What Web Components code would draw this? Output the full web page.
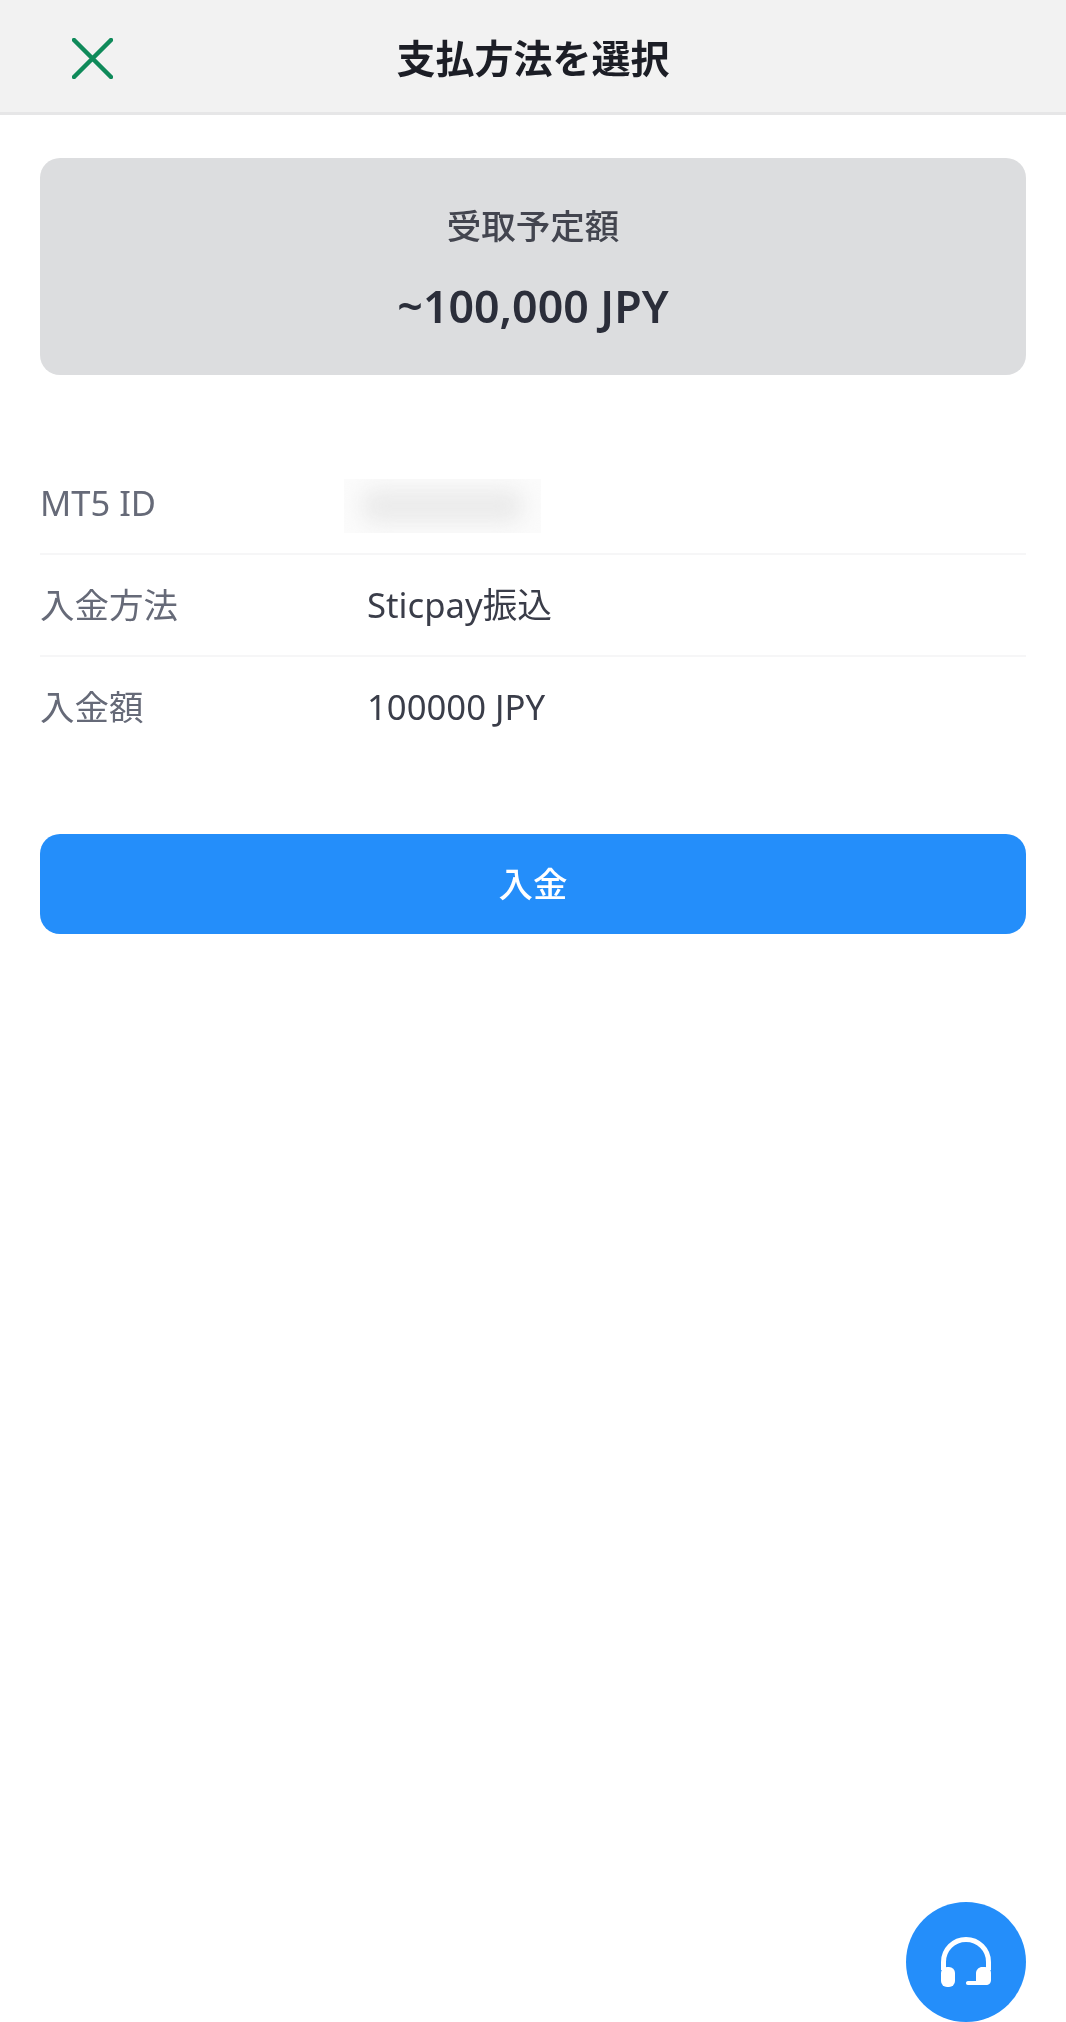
<!DOCTYPE html>
<html lang="ja">
<head>
<meta charset="utf-8">
<title>支払方法を選択</title>
<style>
  html, body {
    margin: 0;
    background: #fff;
    font-family: "Noto Sans", "Noto Sans CJK JP", sans-serif;
  }
</style>
</head>
<body>
<pay-page>
  <pay-header slot="header">支払方法を選択</pay-header>
  <pay-summary label="受取予定額">~100,000 JPY</pay-summary>
  <pay-rows>
    <pay-row label="MT5 ID"><pay-redacted></pay-redacted></pay-row>
    <pay-row label="入金方法">Sticpay振込</pay-row>
    <pay-row label="入金額" last>100000 JPY</pay-row>
  </pay-rows>
  <pay-button>入金</pay-button>
  <pay-support slot="overlay"></pay-support>
</pay-page>

<script>
const define = (name, html) => {
  customElements.define(name, class extends HTMLElement {
    constructor () {
      super()
      this.attachShadow({ mode: 'open' }).innerHTML = html
      const label = this.shadowRoot.querySelector('[data-label]')
      if (label) label.textContent = this.getAttribute('label')
    }
  })
}

define('pay-page', `
  <style>
    :host {
      display: block;
      position: relative;
      width: 1066px;
      height: 2022px;
      overflow: hidden;
      color: #2f3340;
      filter: blur(0.4px);
    }
    main {
      display: flex;
      flex-direction: column;
      padding: 43px 40px 0;
    }
  </style>
  <slot name="header"></slot>
  <main><slot></slot></main>
  <slot name="overlay"></slot>
`)

define('pay-header', `
  <style>
    :host {
      display: flex;
      align-items: center;
      justify-content: center;
      position: relative;
      height: 112px;
      background: #f2f2f2;
      border-bottom: 3px solid #e6e6e7;
      font-size: 39px;
      font-weight: 700;
      color: #1c1e26;
    }
    svg {
      position: absolute;
      left: 72px;
      top: 38px;
    }
  </style>
  <svg width="41" height="41" viewBox="0 0 41 41" fill="none" stroke="#0f8a5a" stroke-width="4.500" stroke-linecap="round">
    <path d="M2 2 39 39M39 2 2 39"/>
  </svg>
  <slot></slot>
`)

define('pay-summary', `
  <style>
    :host {
      display: flex;
      flex-direction: column;
      align-items: center;
      height: 217px;
      box-sizing: border-box;
      padding-top: 43px;
      background: #dcdddf;
      border-radius: 20px;
    }
    #label {
      font-size: 34.5px;
      font-weight: 500;
      line-height: 50px;
      color: #43454f;
    }
    #value {
      margin-top: 26px;
      font-size: 44.700px;
      font-weight: 600;
      line-height: 58px;
      color: #2b2e3a;
    }
  </style>
  <div id="label" data-label></div>
  <div id="value"><slot></slot></div>
`)

define('pay-rows', `
  <style>
    :host {
      display: block;
      margin-top: 78px;
    }
  </style>
  <slot></slot>
`)

define('pay-row', `
  <style>
    :host {
      display: grid;
      grid-template-columns: 327px 1fr;
      align-items: center;
      height: 100px;
      border-bottom: 2px solid #f6f6f7;
      font-size: 34.7px;
      line-height: 1.2;
      color: #3a3d49;
    }
    :host([last]) {
      border-bottom-color: transparent;
    }
    #label {
      font-size: 34.5px;
      color: #666a78;
    }
  </style>
  <div id="label" data-label></div>
  <div><slot></slot></div>
`)

define('pay-redacted', `
  <style>
    :host {
      display: block;
      position: relative;
      width: 197px;
      height: 54px;
      margin: 6px 0 0 -23px;
      background: #fbfbfb;
      overflow: hidden;
    }
    div {
      position: absolute;
      inset: 10px 18px;
      background: #ebebeb;
      border-radius: 14px;
      filter: blur(10px);
    }
  </style>
  <div></div>
`)

define('pay-button', `
  <style>
    :host {
      display: flex;
      align-items: center;
      justify-content: center;
      height: 100px;
      margin-top: 75px;
      background: #248efa;
      border-radius: 20px;
      font-size: 34.5px;
      font-weight: 500;
      line-height: 1.2;
      color: #fff;
    }
  </style>
  <slot></slot>
`)

define('pay-support', `
  <style>
    :host {
      position: absolute;
      right: 40px;
      bottom: 0;
      display: flex;
      align-items: center;
      justify-content: center;
      width: 120px;
      height: 120px;
      border-radius: 50%;
      background: #248efa;
    }
    svg { display: block; }
  </style>
  <svg width="50" height="50" viewBox="0 0 50 50" fill="none">
    <path d="M2.500 33V25A22.500 22.500 0 0 1 47.500 25V33" stroke="#fff" stroke-width="5"/>
    <rect x="0" y="30" width="14" height="20" rx="6" fill="#fff"/>
    <path d="M40 30H44C48 30 50 33 50 36V43C50 46 48 48 45 48H27C25.500 48 25 47 25 46S25.500 44 27 44H35V37C35 33 37 31 40 30Z" fill="#fff"/>
  </svg>
`)
</script>
</body>
</html>
